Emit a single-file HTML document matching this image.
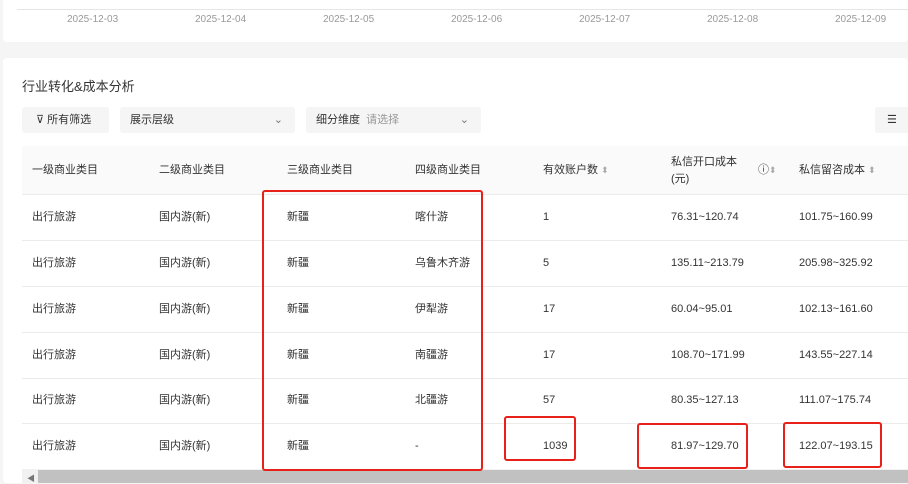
<!DOCTYPE html><html><head><meta charset="utf-8"><style>
*{margin:0;padding:0;box-sizing:border-box}
body{width:908px;height:483px;overflow:hidden;background:#f5f5f5;font-family:"Liberation Sans","Noto Sans CJK SC",sans-serif;color:#333;position:relative}
.a{position:absolute}
.p1{left:3px;top:0;width:905px;height:42px;background:#fff;border-radius:0 0 4px 4px}
.p2{left:3px;top:58px;width:905px;height:425px;background:#fff;border-radius:4px}
.d{font-size:10px;color:#999;top:13px;line-height:14px}
.h{font-size:11px;color:#333;line-height:14px}
.c{font-size:11px;color:#333;line-height:14px;height:14px}
.line{height:1px;background:#ebebeb;left:22px;width:886px}
.box{border:2px solid #e8201a;border-radius:3px}
.f{background:#f5f5f5;border-radius:3px;height:26px;top:107px;font-size:11px;line-height:26px}
</style></head><body>
<div class="a p1"></div>
<div class="a" style="left:17px;top:9px;width:891px;height:1px;background:#e5e5e5"></div>
<div class="a d" style="left:67px">2025-12-03</div>
<div class="a d" style="left:195px">2025-12-04</div>
<div class="a d" style="left:323px">2025-12-05</div>
<div class="a d" style="left:451px">2025-12-06</div>
<div class="a d" style="left:579px">2025-12-07</div>
<div class="a d" style="left:707px">2025-12-08</div>
<div class="a d" style="left:835px">2025-12-09</div>
<div class="a p2"></div>
<div class="a" style="left:22px;top:78px;font-size:13px;line-height:18px">行业转化&amp;成本分析</div>
<div class="a f" style="left:22px;width:87px;padding-left:14px">⊽ 所有筛选</div>
<div class="a f" style="left:120px;width:175px;padding-left:10px">展示层级<span class="a" style="right:12px;color:#777">⌄</span></div>
<div class="a f" style="left:306px;width:175px;padding-left:10px">细分维度 <span style="color:#999">&nbsp;请选择</span><span class="a" style="right:12px;color:#777">⌄</span></div>
<div class="a f" style="left:875px;width:40px;padding-left:12px">☰</div>
<div class="a" style="left:22px;top:146px;width:886px;height:48px;background:#fafafa"></div>
<div class="a h" style="left:32px;top:163px">一级商业类目</div>
<div class="a h" style="left:159px;top:163px">二级商业类目</div>
<div class="a h" style="left:287px;top:163px">三级商业类目</div>
<div class="a h" style="left:415px;top:163px">四级商业类目</div>
<div class="a h" style="left:543px;top:163px">有效账户数 <span style="color:#aaa;font-size:9px">⬍</span></div>
<div class="a h" style="left:671px;top:154px;line-height:17px">私信开口成本<br>(元)</div>
<div class="a h" style="left:758px;top:163px">ⓘ<span style="color:#aaa;font-size:9px">⬍</span></div>
<div class="a h" style="left:799px;top:163px">私信留咨成本 <span style="color:#aaa;font-size:9px">⬍</span></div>
<div class="a line" style="top:194px"></div>
<div class="a line" style="top:240px"></div>
<div class="a line" style="top:286px"></div>
<div class="a line" style="top:332px"></div>
<div class="a line" style="top:378px"></div>
<div class="a line" style="top:423px"></div>
<div class="a c" style="left:32px;top:210px">出行旅游</div><div class="a c" style="left:159px;top:210px">国内游(新)</div><div class="a c" style="left:287px;top:210px">新疆</div><div class="a c" style="left:415px;top:210px">喀什游</div><div class="a c" style="left:543px;top:210px">1</div><div class="a c" style="left:671px;top:210px">76.31~120.74</div><div class="a c" style="left:799px;top:210px">101.75~160.99</div>
<div class="a c" style="left:32px;top:256px">出行旅游</div><div class="a c" style="left:159px;top:256px">国内游(新)</div><div class="a c" style="left:287px;top:256px">新疆</div><div class="a c" style="left:415px;top:256px">乌鲁木齐游</div><div class="a c" style="left:543px;top:256px">5</div><div class="a c" style="left:671px;top:256px">135.11~213.79</div><div class="a c" style="left:799px;top:256px">205.98~325.92</div>
<div class="a c" style="left:32px;top:302px">出行旅游</div><div class="a c" style="left:159px;top:302px">国内游(新)</div><div class="a c" style="left:287px;top:302px">新疆</div><div class="a c" style="left:415px;top:302px">伊犁游</div><div class="a c" style="left:543px;top:302px">17</div><div class="a c" style="left:671px;top:302px">60.04~95.01</div><div class="a c" style="left:799px;top:302px">102.13~161.60</div>
<div class="a c" style="left:32px;top:348px">出行旅游</div><div class="a c" style="left:159px;top:348px">国内游(新)</div><div class="a c" style="left:287px;top:348px">新疆</div><div class="a c" style="left:415px;top:348px">南疆游</div><div class="a c" style="left:543px;top:348px">17</div><div class="a c" style="left:671px;top:348px">108.70~171.99</div><div class="a c" style="left:799px;top:348px">143.55~227.14</div>
<div class="a c" style="left:32px;top:393px">出行旅游</div><div class="a c" style="left:159px;top:393px">国内游(新)</div><div class="a c" style="left:287px;top:393px">新疆</div><div class="a c" style="left:415px;top:393px">北疆游</div><div class="a c" style="left:543px;top:393px">57</div><div class="a c" style="left:671px;top:393px">80.35~127.13</div><div class="a c" style="left:799px;top:393px">111.07~175.74</div>
<div class="a c" style="left:32px;top:439px">出行旅游</div><div class="a c" style="left:159px;top:439px">国内游(新)</div><div class="a c" style="left:287px;top:439px">新疆</div><div class="a c" style="left:415px;top:439px">-</div><div class="a c" style="left:543px;top:439px">1039</div><div class="a c" style="left:671px;top:439px">81.97~129.70</div><div class="a c" style="left:799px;top:439px">122.07~193.15</div>
<div class="a" style="left:22px;top:469px;width:886px;height:14px;background:#f1f1f1"></div>
<div class="a" style="left:38px;top:470px;width:870px;height:13px;background:#c1c1c1"></div>
<div class="a" style="left:27px;top:473px;font-size:8px;color:#777">◀</div>
<div class="a box" style="left:262px;top:190px;width:221px;height:281px"></div>
<div class="a box" style="left:504px;top:416px;width:72px;height:45px"></div>
<div class="a box" style="left:637px;top:423px;width:111px;height:46px"></div>
<div class="a box" style="left:783px;top:422px;width:99px;height:46px"></div>
</body></html>
